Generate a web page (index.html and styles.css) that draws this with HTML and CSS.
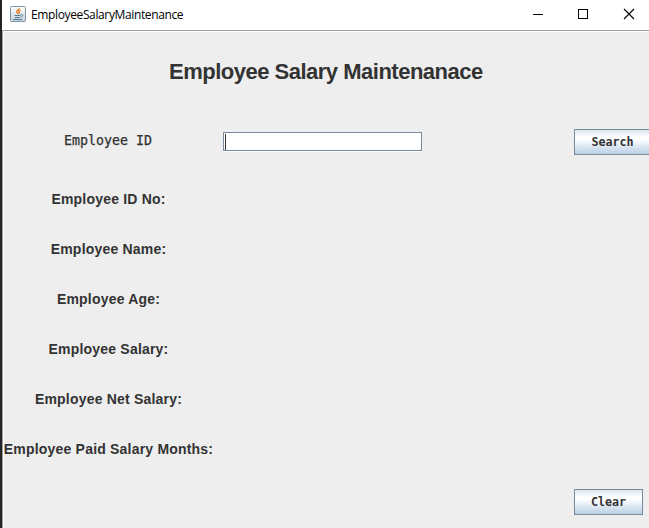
FILE: index.html
```html
<!DOCTYPE html>
<html lang="en">
<head>
<meta charset="utf-8">
<title>EmployeeSalaryMaintenance</title>
<link rel="stylesheet" href="styles.css">
</head>
<body>
<div class="window">
  <header class="titlebar">
    <svg class="app-icon" viewBox="0 0 16 16">
      <defs>
        <linearGradient id="tile" x1="0" y1="0" x2="0" y2="1"><stop offset="0" stop-color="#fff"/><stop offset="1" stop-color="#c3d0d9"/></linearGradient>
      </defs>
      <rect x=".5" y=".5" width="15" height="15" rx="1" fill="url(#tile)" stroke="#7e93a3"/>
      <path d="M9.3 2c.4 1.5-3 2.3-2.6 3.8.2.8 1 1.2 1 2.2M10.6 4.2C8.7 5 8.6 5.7 9.2 6.4c.4.6 0 1.2-.6 1.6" fill="none" stroke="#e9812a" stroke-width="1.4"/>
      <path d="M4.5 9.5h6M5 11.5h5M3.2 13.5h8.8M10.5 8.8c2.9-.9 3 1.6.2 2.3" fill="none" stroke="#527a94" stroke-width="1"/>
    </svg>
    <span class="caption">EmployeeSalaryMaintenance</span>
    <svg class="controls" viewBox="0 0 102 12" shape-rendering="crispEdges">
      <path d="M0 6.5h10M45.5 1.5h9v9h-9z" fill="none" stroke="#000"/>
      <path d="M91 1l10 10M101 1L91 11" fill="none" stroke="#000" stroke-width="1.1" shape-rendering="geometricPrecision"/>
    </svg>
  </header>
  <main class="panel">
    <h1 class="heading">Employee Salary Maintenanace</h1>
    <div class="search-row">
      <label class="search-label" for="employee-id">Employee ID</label>
      <div class="field"><input id="employee-id" class="field-input" type="text"><span class="caret"></span></div>
      <button class="button search" type="button">Search</button>
    </div>
    <div class="details">
      <div class="detail">Employee ID No:</div>
      <div class="detail">Employee Name:</div>
      <div class="detail">Employee Age:</div>
      <div class="detail">Employee Salary:</div>
      <div class="detail">Employee Net Salary:</div>
      <div class="detail">Employee Paid Salary Months:</div>
    </div>
    <button class="button clear" type="button">Clear</button>
  </main>
</div>
</body>
</html>
```
FILE: styles.css
```css
* { box-sizing: border-box; }
body { margin: 0; width: 649px; height: 528px; overflow: hidden; background: #fff; }
.window { height: 528px; border-left: 2px solid #252326; display: flex; flex-direction: column; }
.titlebar { height: 30px; flex: none; display: flex; align-items: center; padding: 0 14px 0 8px; background: #fff; }
.app-icon { width: 16px; height: 16px; margin-top: -2px; }
.caption { margin-left: 5px; font: 12px/16px "Open Sans", sans-serif; letter-spacing: -0.37px; color: #000; }
.controls { width: 102px; height: 12px; margin: -2px 0 0 auto; }
.panel {
  flex: 1; display: flex; flex-direction: column;
  background: #eee; border-top: 1px solid #a0a0a0; border-left: 1px solid #a0a0a0;
  box-shadow: inset 1px 1px #fff; color: #333;
}
.heading { margin: 28px 0 0 166px; font: bold 22px/26px "Liberation Sans", sans-serif; letter-spacing: -0.5px; white-space: nowrap; }
.search-row { display: flex; margin-top: 44px; height: 26px; align-items: flex-start; }
.search-label { flex: none; width: 220px; padding-left: 61px; font: 13.3px/24px "DejaVu Sans Mono", monospace; -webkit-text-stroke: .25px #333; white-space: nowrap; }
.field { flex: none; width: 199px; height: 19px; margin-top: 3px; padding: 1px 1px 1px 2px; border: 1px solid #7a8a99; background: #fff; box-shadow: 0 1px #fff; display: flex; position: relative; }
.field-input { width: 100%; border: 0; padding: 0 3px; outline: 0; background: transparent; font: 12px "Liberation Sans", sans-serif; }
.caret { position: absolute; left: 1px; top: 1px; width: 1px; height: 16px; background: #333; }
.button {
  flex: none; height: 26px; padding: 0; border: 1px solid #7a8a99; border-radius: 0;
  background: linear-gradient(#dce7f1 0%, #fff 30%, #fff 38%, #b8cfe5 100%);
  color: #333; font: bold 11.7px/24px "DejaVu Sans Mono", monospace;
}
.search { width: 77px; margin-left: 152px; }
.details { margin-top: 19px; width: 211px; }
.detail { height: 50px; display: flex; justify-content: center; font: bold 14px/50px "Liberation Sans", sans-serif; white-space: nowrap; letter-spacing: .2px; }
.clear { width: 69px; margin: 15px 0 0 571px; }
```
